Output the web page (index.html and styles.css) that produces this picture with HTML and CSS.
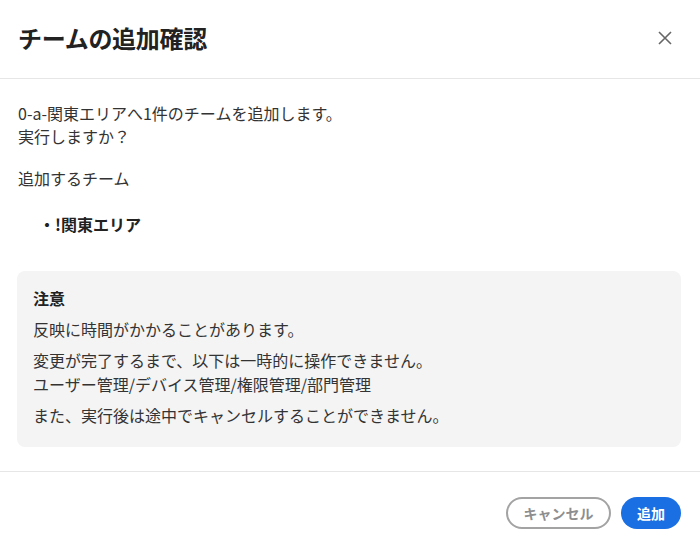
FILE: index.html
```html
<!DOCTYPE html>
<html lang="ja">
<head>
<meta charset="utf-8">
<link rel="stylesheet" href="styles.css">
</head>
<body>
<div class="dialog">
  <header class="dialog-header">
    <h1 class="dialog-title">チームの追加確認</h1>
    <button class="close-btn" aria-label="閉じる">
      <svg width="14" height="14" viewBox="0 0 14 14"><path d="M1 1L13 13M13 1L1 13" stroke="#666" stroke-width="1.6" fill="none"/></svg>
    </button>
  </header>
  <main class="dialog-body">
    <p class="msg">0-a-関東エリアへ1件のチームを追加します。<br>実行しますか？</p>
    <p class="sub">追加するチーム</p>
    <ul class="team-list">
      <li>・!関東エリア</li>
    </ul>
    <section class="notice">
      <h2 class="notice-title">注意</h2>
      <p class="notice-p">反映に時間がかかることがあります。</p>
      <p class="notice-p">変更が完了するまで、以下は一時的に操作できません。<br>ユーザー管理/デバイス管理/権限管理/部門管理</p>
      <p class="notice-p">また、実行後は途中でキャンセルすることができません。</p>
    </section>
  </main>
  <footer class="dialog-footer">
    <button class="btn btn-cancel">キャンセル</button>
    <button class="btn btn-primary">追加</button>
  </footer>
</div>
</body>
</html>
```
FILE: styles.css
```css
* { box-sizing: border-box; }
html, body { margin: 0; padding: 0; background: #fff; }
body {
  font-family: "Noto Sans CJK JP", "Noto Sans", sans-serif;
  color: #333;
  width: 700px;
  height: 547px;
  overflow: hidden;
}
.dialog { width: 700px; }
.dialog-header {
  display: flex;
  align-items: center;
  justify-content: space-between;
  height: 79px;
  padding: 0 28px 2px 18px;
  border-bottom: 1px solid #e6e6e6;
}
.dialog-title {
  margin: 0;
  font-size: 24px;
  font-weight: 700;
  line-height: 36px;
  color: #222;
  letter-spacing: -0.3px;
}
.close-btn {
  border: 0;
  background: none;
  padding: 0;
  width: 14px;
  height: 14px;
  display: flex;
  cursor: pointer;
}
.dialog-body {
  padding: 23px 19px 24px 17px;
  border-bottom: 1px solid #e6e6e6;
}
.msg, .sub {
  margin: 0 0 0 1px;
  font-size: 16px;
  line-height: 23px;
}
.sub { margin-top: 19px; }
.team-list {
  list-style: none;
  margin: 23px 0 0 0;
  padding: 0 0 0 22px;
  font-size: 16px;
  line-height: 23px;
  font-weight: 700;
  color: #222;
}
.notice {
  margin-top: 35px;
  background: #f4f4f4;
  border-radius: 8px;
  padding: 15px 16px 20px;
}
.notice-title {
  margin: 0;
  font-size: 16px;
  font-weight: 700;
  line-height: 24px;
  color: #222;
}
.notice-p {
  margin: 7px 0 0;
  font-size: 16px;
  line-height: 24px;
}
.dialog-footer {
  display: flex;
  justify-content: flex-end;
  gap: 10px;
  padding: 25px 19px 0;
}
.btn {
  height: 32px;
  border-radius: 16px;
  font-family: inherit;
  font-size: 14px;
  font-weight: 700;
  line-height: 1;
  cursor: pointer;
}
.btn-cancel {
  width: 105px;
  background: #fff;
  border: 2px solid #a3a3a3;
  color: #8e8e8e;
}
.btn-primary {
  width: 60px;
  background: #1a6fe3;
  border: 0;
  color: #fff;
}
```
